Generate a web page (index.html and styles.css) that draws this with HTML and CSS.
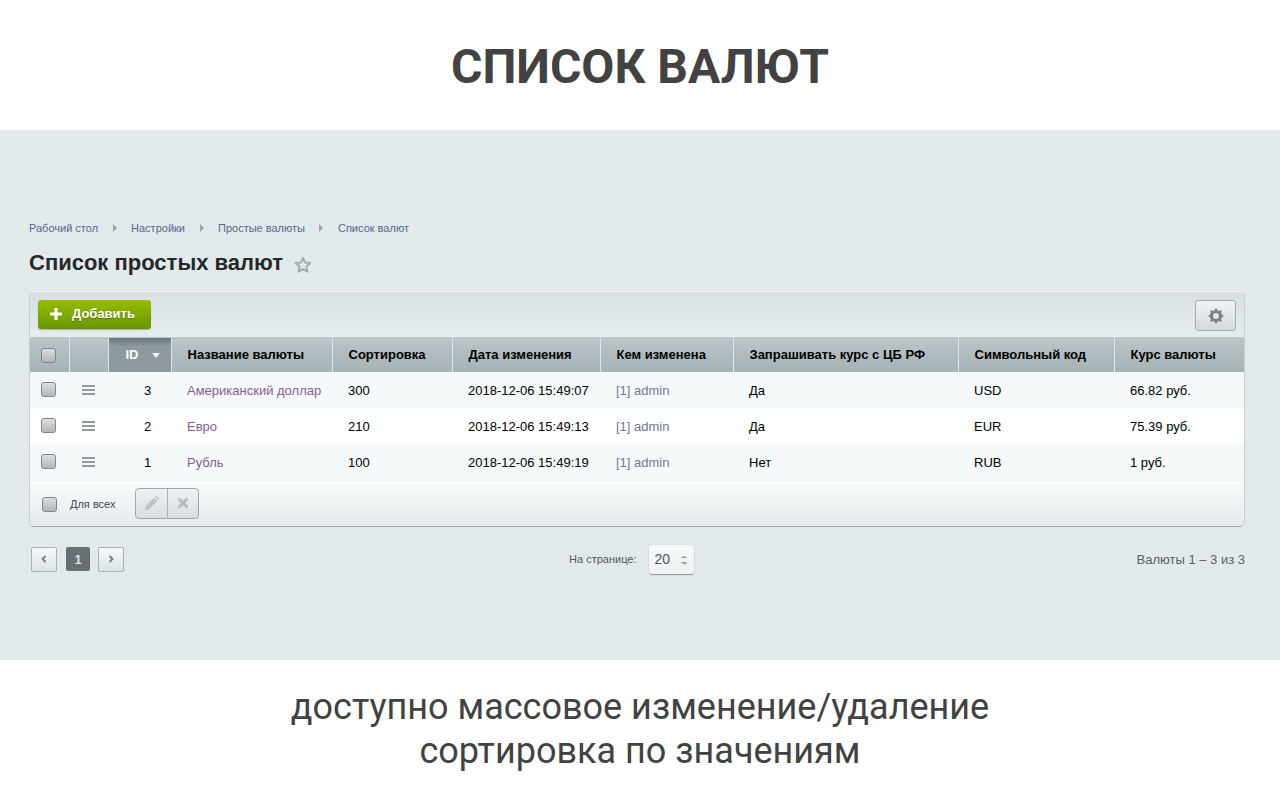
FILE: index.html
```html
<!DOCTYPE html>
<html lang="ru">

<head>
    <meta charset="UTF-8">
    <title>Список валют</title>
    <link rel="stylesheet" href="styles.css">
</head>

<body>
    <header class="promo-head">
        <h1>СПИСОК ВАЛЮТ</h1>
    </header>

    <section class="band">
        <div class="band-inner">
            <div class="crumbs">
                <a>Рабочий стол</a><i class="crumb-arrow"></i>
                <a>Настройки</a><i class="crumb-arrow"></i>
                <a>Простые валюты</a><i class="crumb-arrow"></i>
                <a>Список валют</a>
            </div>

            <div class="page-title">
                <h2>Список простых валют</h2>
                <svg class="star" width="18" height="18" viewBox="0 0 18 18">
                    <path d="M9 1.800l2.100 4.800 5.200.5-3.900 3.500 1.100 5.100L9 13.100l-4.500 2.600 1.100-5.100-3.900-3.500 5.200-.5z" fill="none" stroke="#a0abb3" stroke-width="2" stroke-linejoin="round"/>
                </svg>
            </div>

            <div class="card">
                <div class="toolbar">
                    <button class="btn-add">
                        <svg width="12" height="12" viewBox="0 0 12 12"><path d="M4.500 0h3v4.500H12v3H7.500V12h-3V7.500H0v-3h4.500z" fill="#fff"/></svg>
                        Добавить
                    </button>
                    <button class="btn-gear">
                        <svg width="16" height="16" viewBox="0 0 16 16">
                            <circle cx="8" cy="8" r="4.500" fill="none" stroke="#7b8387" stroke-width="3.200"/>
                            <path d="M8 .8v2.400M8 12.800v2.400M.8 8h2.400M12.800 8h2.400M2.900 2.900l1.700 1.700M11.400 11.400l1.700 1.700M13.100 2.900l-1.700 1.700M4.600 11.400l-1.700 1.700" stroke="#7b8387" stroke-width="2.400"/>
                        </svg>
                    </button>
                </div>

                <table class="grid">
                    <colgroup>
                        <col class="c-check"><col class="c-drag"><col class="c-id"><col class="c-name"><col class="c-sort">
                        <col class="c-date"><col class="c-user"><col class="c-ask"><col class="c-code"><col class="c-rate">
                    </colgroup>
                    <thead>
                        <tr>
                            <th class="cell-check"><span class="check"></span></th>
                            <th></th>
                            <th class="th-id">ID<i class="sort-arrow"></i></th>
                            <th>Название валюты</th>
                            <th>Сортировка</th>
                            <th>Дата изменения</th>
                            <th>Кем изменена</th>
                            <th>Запрашивать курс с ЦБ РФ</th>
                            <th>Символьный код</th>
                            <th>Курс валюты</th>
                        </tr>
                    </thead>
                    <tbody>
                        <tr>
                            <td class="cell-check"><span class="check"></span></td>
                            <td class="cell-drag"><span class="drag"></span></td>
                            <td class="cell-id">3</td>
                            <td><a class="link">Американский доллар</a></td>
                            <td>300</td>
                            <td>2018-12-06 15:49:07</td>
                            <td><a class="link-user">[1] admin</a></td>
                            <td>Да</td>
                            <td>USD</td>
                            <td>66.82 руб.</td>
                        </tr>
                        <tr>
                            <td class="cell-check"><span class="check"></span></td>
                            <td class="cell-drag"><span class="drag"></span></td>
                            <td class="cell-id">2</td>
                            <td><a class="link">Евро</a></td>
                            <td>210</td>
                            <td>2018-12-06 15:49:13</td>
                            <td><a class="link-user">[1] admin</a></td>
                            <td>Да</td>
                            <td>EUR</td>
                            <td>75.39 руб.</td>
                        </tr>
                        <tr>
                            <td class="cell-check"><span class="check"></span></td>
                            <td class="cell-drag"><span class="drag"></span></td>
                            <td class="cell-id">1</td>
                            <td><a class="link">Рубль</a></td>
                            <td>100</td>
                            <td>2018-12-06 15:49:19</td>
                            <td><a class="link-user">[1] admin</a></td>
                            <td>Нет</td>
                            <td>RUB</td>
                            <td>1 руб.</td>
                        </tr>
                    </tbody>
                </table>

                <div class="card-foot">
                    <span class="check"></span>
                    <span class="for-all">Для всех</span>
                    <div class="btn-group">
                        <span class="btn-part">
                            <svg width="18" height="18" viewBox="0 0 18 18"><path d="M1.500 16.500l1.200-4.600 8.200-8.200 3.400 3.400-8.200 8.200zM11.900 2.700l1.300-1.300 3.400 3.400-1.300 1.300z" fill="#bcc3c5"/></svg>
                        </span>
                        <span class="btn-part">
                            <svg width="12" height="12" viewBox="0 0 12 12"><path d="M1.500 1.500l9 9M10.500 1.500l-9 9" stroke="#b4bbbd" stroke-width="2.800"/></svg>
                        </span>
                    </div>
                </div>
            </div>

            <div class="pager">
                <div class="pages">
                    <span class="page-btn">
                        <svg width="8" height="8" viewBox="0 0 8 8"><path d="M5.500 1L2.500 4l3 3" fill="none" stroke="#727b80" stroke-width="1.800"/></svg>
                    </span>
                    <span class="page-num">1</span>
                    <span class="page-btn">
                        <svg width="8" height="8" viewBox="0 0 8 8"><path d="M2.500 1l3 3-3 3" fill="none" stroke="#727b80" stroke-width="1.800"/></svg>
                    </span>
                </div>
                <div class="per-page">
                    <span class="per-label">На странице:</span>
                    <span class="per-select">20<i class="spin"></i></span>
                </div>
                <div class="total">Валюты 1 – 3 из 3</div>
            </div>
        </div>
    </section>

    <footer class="promo-foot">
        доступно массовое изменение/удаление<br>сортировка по значениям
    </footer>
</body>

</html>
```

FILE: styles.css
```css
* {
    margin: 0;
    padding: 0;
    box-sizing: border-box;
}

body {
    background: #fff;
    font-family: 'Liberation Sans', Arial, sans-serif;
    color: #000;
    width: 1280px;
    height: 800px;
    overflow: hidden;
}

.promo-head {
    height: 130px;
    padding-top: 2px;
    display: flex;
    align-items: center;
    justify-content: center;
}

.promo-head h1 {
    font-family: Roboto, sans-serif;
    font-size: 48px;
    font-weight: 700;
    color: #424242;
}

.band {
    height: 530px;
    background: #e2e9eb;
    padding: 82px 20px 0;
}

.band-inner {
    height: 390px;
    padding: 9px 15px 0 9px;
    background: repeating-conic-gradient(rgba(255, 255, 255, 0.05) 0% 25%, transparent 0% 50%) 0 0 / 3px 3px;
}

.crumbs {
    display: flex;
    align-items: center;
    height: 14px;
    font-size: 11px;
    color: #53698f;
}

.crumb-arrow {
    width: 0;
    height: 0;
    margin: 0 14.500px;
    border-left: 4px solid #98a4aa;
    border-top: 4px solid transparent;
    border-bottom: 4px solid transparent;
    box-sizing: content-box;
}

.page-title {
    display: flex;
    align-items: center;
    gap: 11px;
    margin-top: 14px;
    height: 28px;
}

.page-title h2 {
    font-size: 22px;
    font-weight: 700;
    color: #26282c;
}

.star {
    margin-top: 3px;
}

.card {
    margin-top: 14px;
    width: 1216px;
    height: 236px;
    border: 1px solid #c5ced1;
    border-top-color: #f4f7f7;
    border-bottom-color: #9ea8aa;
    border-radius: 5px;
    overflow: hidden;
    background: #e3eaec;
}

.toolbar {
    height: 46px;
    padding: 8px 8px 0;
    display: flex;
    justify-content: space-between;
    background: linear-gradient(to bottom, #d7dfe2, #e6edef);
    border-bottom: 1px solid #c0c9cc;
}

.btn-add {
    width: 113px;
    height: 29px;
    display: flex;
    align-items: center;
    gap: 10px;
    padding: 0 0 2px 12px;
    border: none;
    border-radius: 3px;
    background: linear-gradient(to bottom, #98bc00, #689600);
    box-shadow: 0 1px 1px rgba(0, 0, 0, 0.25);
    font-family: inherit;
    font-size: 13px;
    font-weight: 700;
    color: #fff;
    text-shadow: 0 1px 1px rgba(0, 0, 0, 0.3);
}

.btn-gear {
    width: 41px;
    height: 31px;
    display: flex;
    align-items: center;
    justify-content: center;
    border: 1px solid #a3adb0;
    border-radius: 3px;
    background: linear-gradient(to bottom, #f0f3f3, #d3dadc);
}

.grid {
    width: 1214px;
    table-layout: fixed;
    border-collapse: collapse;
}

.c-check { width: 39px; }
.c-drag { width: 39px; }
.c-id { width: 63px; }
.c-name { width: 161px; }
.c-sort { width: 120px; }
.c-date { width: 148px; }
.c-user { width: 133px; }
.c-ask { width: 225px; }
.c-code { width: 156px; }
.c-rate { width: 130px; }

.grid th {
    height: 34px;
    padding: 0 0 2px 16px;
    font-size: 13px;
    font-weight: 700;
    text-align: left;
    white-space: nowrap;
    color: #000;
    background: linear-gradient(to bottom, #b9c5c9, #a6b2b4);
    border-right: 1px solid #dfe6e8;
}

.grid th:last-child {
    border-right: none;
}

.grid th.cell-check {
    padding: 0 0 0 11px;
}

.grid th.th-id {
    padding-left: 17px;
    color: #fff;
    background: linear-gradient(to bottom, #67737a, #8d999f 25%, #8d999f);
    border-left: 1px solid #8a969a;
}

.sort-arrow {
    display: inline-block;
    margin-left: 13px;
    vertical-align: middle;
    border-top: 5px solid #f0f3f4;
    border-left: 4px solid transparent;
    border-right: 4px solid transparent;
}

.grid td {
    height: 36px;
    padding: 0 0 0 16px;
    font-size: 13px;
    white-space: nowrap;
    color: #000;
}

.grid tbody tr:nth-child(odd) {
    background: #f5f9f9;
}

.grid tbody tr:nth-child(even) {
    background: #fff;
}

.grid td.cell-check {
    padding: 0 0 1px 11px;
}

.grid td.cell-drag {
    padding: 0 0 1px 13px;
}

.grid td.cell-id {
    padding: 0 0 0 36px;
}

.link {
    color: #855e97;
}

.link-user {
    color: #76749a;
}

.check {
    display: block;
    width: 15px;
    height: 15px;
    border: 1px solid #7e878a;
    border-radius: 3px;
    background: linear-gradient(to bottom, #dcdfe0, #b2b6b9);
}

.drag {
    display: block;
    width: 13px;
    height: 10px;
    border-top: 2px solid #92999c;
    border-bottom: 2px solid #92999c;
    position: relative;
}

.drag::after {
    content: "";
    position: absolute;
    left: 0;
    right: 0;
    top: 2px;
    height: 2px;
    background: #92999c;
}

.card-foot {
    height: 47px;
    display: flex;
    align-items: center;
    padding: 0 0 2px 12px;
    border-top: 1px solid #eef2f3;
    background: linear-gradient(to bottom, #fbfcfc, #e2e9eb);
}

.card-foot .check {
    margin-top: 2px;
}

.for-all {
    margin: 2px 0 0 13px;
    font-size: 11px;
    color: #3f4a52;
}

.btn-group {
    display: flex;
    margin-left: 20px;
    width: 64px;
    height: 31px;
    border: 1px solid #9ea8ab;
    border-radius: 4px;
    background: linear-gradient(to bottom, #edf1f2, #d8dfe1);
}

.btn-part {
    flex: 1;
    display: flex;
    align-items: center;
    justify-content: center;
}

.btn-part:first-child {
    border-right: 1px solid #a7b1b4;
}

.pager {
    margin-top: 16px;
    width: 1216px;
    height: 32px;
    display: flex;
    align-items: center;
    justify-content: space-between;
}

.pages {
    display: flex;
    align-items: center;
    gap: 9px;
    padding-left: 2px;
}

.page-btn {
    width: 26px;
    height: 25px;
    display: flex;
    align-items: center;
    justify-content: center;
    border: 1px solid #a5b2b7;
    border-radius: 2px;
    background: linear-gradient(to bottom, #f7fafa, #dbe4e7);
}

.page-btn:last-child {
    margin-left: -1px;
}

.page-num {
    width: 24px;
    height: 24px;
    display: flex;
    align-items: center;
    justify-content: center;
    border-radius: 2px;
    background: #676f75;
    font-size: 13px;
    font-weight: 700;
    color: #dfe3e4;
}

.per-page {
    display: flex;
    align-items: center;
    gap: 12px;
    margin-left: 2px;
}

.per-label {
    font-size: 11px;
    color: #4f5b60;
}

.per-select {
    width: 45px;
    height: 29px;
    display: flex;
    align-items: center;
    padding-left: 6px;
    border-radius: 3px;
    background: linear-gradient(to bottom, #f7f9f9, #eef2f3);
    box-shadow: 0 1px 1px rgba(0, 0, 0, 0.35), 0 0 1px rgba(0, 0, 0, 0.2);
    font-size: 14px;
    color: #4d565a;
    position: relative;
}

.spin {
    position: absolute;
    right: 7px;
    top: 10px;
    width: 6px;
    height: 10px;
    background:
        linear-gradient(135deg, transparent 50%, #9aa3a6 50%) left top / 3px 3px no-repeat,
        linear-gradient(225deg, transparent 50%, #9aa3a6 50%) right top / 3px 3px no-repeat,
        linear-gradient(45deg, transparent 50%, #9aa3a6 50%) left bottom / 3px 3px no-repeat,
        linear-gradient(315deg, transparent 50%, #9aa3a6 50%) right bottom / 3px 3px no-repeat;
}

.total {
    font-size: 13px;
    color: #58626a;
}

.promo-foot {
    height: 140px;
    padding-top: 25px;
    text-align: center;
    font-family: Roboto, sans-serif;
    font-size: 36px;
    line-height: 44px;
    color: #424242;
}
```
